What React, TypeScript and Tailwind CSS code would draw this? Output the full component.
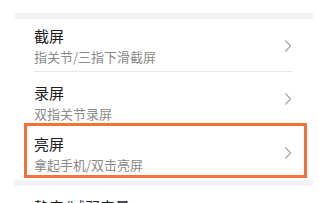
import React from "react";

const font = { fontFamily: '"Noto Sans CJK SC", "Noto Sans", sans-serif' };

function Chevron() {
  return (
    <svg width="8" height="14" viewBox="0 0 8 14" className="shrink-0">
      <path d="M1.5 1.5 L6.5 7 L1.5 12.5" fill="none" stroke="#a8a8a8" strokeWidth="1.3" />
    </svg>
  );
}

function Row({ title, sub, h, textShift, highlight, divider }: { title: string; sub: string; h: string; textShift: string; highlight?: boolean; divider?: boolean }) {
  return (
    <div className={`relative flex items-center ${h} pl-[20px] pr-[21px]`}>
      <div className={`flex-1 flex flex-col ${textShift}`}>
        <div className="text-[15px] leading-[20px] text-[#1c1c1c]">{title}</div>
        <div className="text-[13px] leading-[18px] text-[#8a8a8a] mt-[2px]">{sub}</div>
      </div>
      <Chevron />
      {divider && <div className="absolute left-[20px] right-[20px] bottom-0 h-px bg-[#e8e8e8]" />}
      {highlight && (
        <div className="absolute left-[10px] right-[6px] top-[-3px] bottom-[2px] border-[3px] border-[#f4703c]" />
      )}
    </div>
  );
}

export default function App() {
  return (
    <div className="w-[319px] h-[203px] bg-white overflow-hidden pt-[13px]" style={font}>
      <div className="ml-[14px] w-[299px]">
        <div className="h-[6px] bg-[#f3f3f3]" />
        <Row title="截屏" sub="指关节/三指下滑截屏" h="h-[53px]" textShift="mt-0" divider />
        <Row title="录屏" sub="双指关节录屏" h="h-[54px]" textShift="mt-[8px]" />
        <Row title="亮屏" sub="拿起手机/双击亮屏" h="h-[54px]" textShift="mt-[2px]" highlight />
        <div className="h-[6px] bg-[#f3f3f3]" />
        <div className="pl-[20px] pt-[11px] text-[15px] leading-[20px] text-[#1c1c1c]">静音/减弱音量</div>
      </div>
    </div>
  );
}
